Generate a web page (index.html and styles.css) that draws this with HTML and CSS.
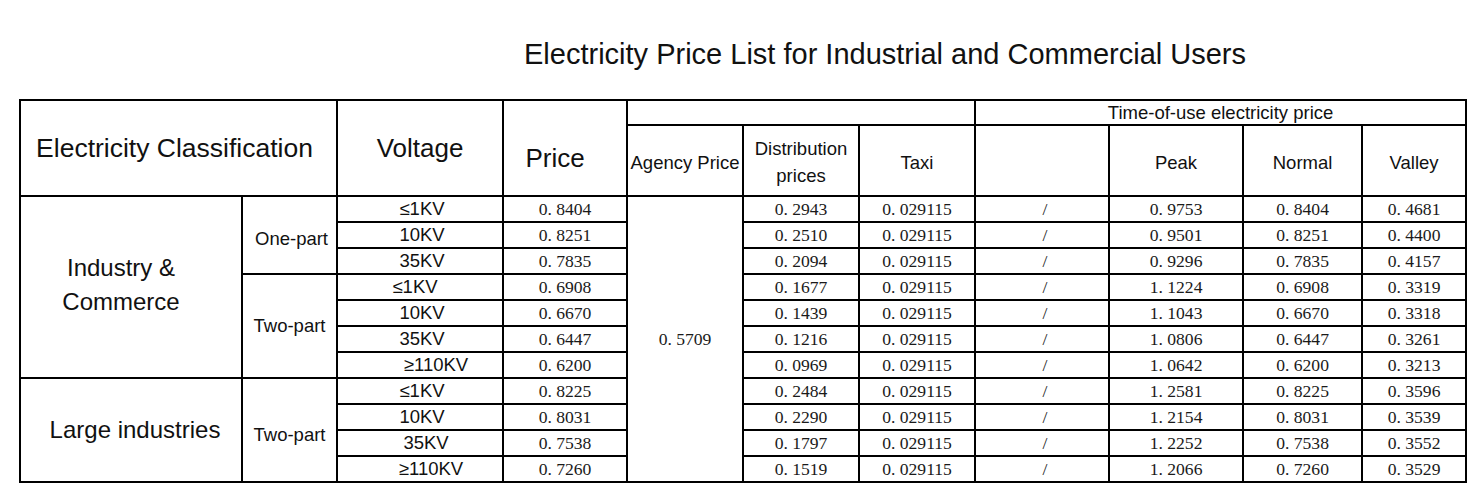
FILE: index.html
```html
<!DOCTYPE html>
<html lang="en">
<head>
<meta charset="utf-8">
<title>Electricity Price List for Industrial and Commercial Users</title>
<link rel="stylesheet" href="styles.css">
</head>
<body>
<h1 class="title">Electricity Price List for Industrial and Commercial Users</h1>
<table class="price-table">
  <colgroup>
    <col class="c-cat"><col class="c-sub"><col class="c-volt"><col class="c-price">
    <col class="c-agency"><col class="c-dist"><col class="c-taxi">
    <col class="c-slash"><col class="c-peak"><col class="c-normal"><col class="c-valley">
  </colgroup>
  <thead>
    <tr class="head-top">
      <th colspan="2" rowspan="2" class="big class-head">Electricity Classification</th>
      <th rowspan="2" class="big">Voltage</th>
      <th rowspan="2" class="big price-head">Price</th>
      <th colspan="3"></th>
      <th colspan="4" class="mid">Time-of-use electricity price</th>
    </tr>
    <tr class="head-sub">
      <th class="mid">Agency Price</th>
      <th class="mid dist">Distribution<br>prices</th>
      <th class="mid">Taxi</th>
      <th></th>
      <th class="mid">Peak</th>
      <th class="mid">Normal</th>
      <th class="mid">Valley</th>
    </tr>
  </thead>
  <tbody>
    <tr>
      <td rowspan="7" class="cat cat-ic">Industry &amp;<br>Commerce</td>
      <td rowspan="3" class="sub sub-one">One-part</td>
      <td class="volt">≤1KV</td><td class="num">0. 8404</td>
      <td rowspan="11" class="num">0. 5709</td>
      <td class="num">0. 2943</td><td class="num">0. 029115</td><td class="num slash">/</td>
      <td class="num">0. 9753</td><td class="num">0. 8404</td><td class="num">0. 4681</td>
    </tr>
    <tr>
      <td class="volt">10KV</td><td class="num">0. 8251</td>
      <td class="num">0. 2510</td><td class="num">0. 029115</td><td class="num slash">/</td>
      <td class="num">0. 9501</td><td class="num">0. 8251</td><td class="num">0. 4400</td>
    </tr>
    <tr>
      <td class="volt">35KV</td><td class="num">0. 7835</td>
      <td class="num">0. 2094</td><td class="num">0. 029115</td><td class="num slash">/</td>
      <td class="num">0. 9296</td><td class="num">0. 7835</td><td class="num">0. 4157</td>
    </tr>
    <tr>
      <td rowspan="4" class="sub">Two-part</td>
      <td class="volt volt-left">≤1KV</td><td class="num">0. 6908</td>
      <td class="num">0. 1677</td><td class="num">0. 029115</td><td class="num slash">/</td>
      <td class="num">1. 1224</td><td class="num">0. 6908</td><td class="num">0. 3319</td>
    </tr>
    <tr>
      <td class="volt">10KV</td><td class="num">0. 6670</td>
      <td class="num">0. 1439</td><td class="num">0. 029115</td><td class="num slash">/</td>
      <td class="num">1. 1043</td><td class="num">0. 6670</td><td class="num">0. 3318</td>
    </tr>
    <tr>
      <td class="volt">35KV</td><td class="num">0. 6447</td>
      <td class="num">0. 1216</td><td class="num">0. 029115</td><td class="num slash">/</td>
      <td class="num">1. 0806</td><td class="num">0. 6447</td><td class="num">0. 3261</td>
    </tr>
    <tr>
      <td class="volt volt-right">≥110KV</td><td class="num">0. 6200</td>
      <td class="num">0. 0969</td><td class="num">0. 029115</td><td class="num slash">/</td>
      <td class="num">1. 0642</td><td class="num">0. 6200</td><td class="num">0. 3213</td>
    </tr>
    <tr>
      <td rowspan="4" class="cat cat-li">Large industries</td>
      <td rowspan="4" class="sub sub-li">Two-part</td>
      <td class="volt">≤1KV</td><td class="num">0. 8225</td>
      <td class="num">0. 2484</td><td class="num">0. 029115</td><td class="num slash">/</td>
      <td class="num">1. 2581</td><td class="num">0. 8225</td><td class="num">0. 3596</td>
    </tr>
    <tr>
      <td class="volt">10KV</td><td class="num">0. 8031</td>
      <td class="num">0. 2290</td><td class="num">0. 029115</td><td class="num slash">/</td>
      <td class="num">1. 2154</td><td class="num">0. 8031</td><td class="num">0. 3539</td>
    </tr>
    <tr>
      <td class="volt volt-r2">35KV</td><td class="num">0. 7538</td>
      <td class="num">0. 1797</td><td class="num">0. 029115</td><td class="num slash">/</td>
      <td class="num">1. 2252</td><td class="num">0. 7538</td><td class="num">0. 3552</td>
    </tr>
    <tr>
      <td class="volt volt-r3">≥110KV</td><td class="num">0. 7260</td>
      <td class="num">0. 1519</td><td class="num">0. 029115</td><td class="num slash">/</td>
      <td class="num">1. 2066</td><td class="num">0. 7260</td><td class="num">0. 3529</td>
    </tr>
  </tbody>
</table>
</body>
</html>
```

FILE: styles.css
```css
html, body {
  margin: 0;
  padding: 0;
  background: #ffffff;
  color: #000000;
  font-family: "Liberation Sans", Arial, sans-serif;
}

.title {
  margin: 0;
  padding: 38px 0 0 524px;
  font-size: 29px;
  line-height: 33px;
  font-weight: normal;
  color: #111111;
}

.price-table {
  margin: 28px 0 0 19px;
  width: 1448px;
  border-collapse: collapse;
  table-layout: fixed;
}

.c-cat { width: 222px; }
.c-sub { width: 95px; }
.c-volt { width: 166px; }
.c-price { width: 124px; }
.c-agency { width: 116px; }
.c-dist { width: 116px; }
.c-taxi { width: 116px; }
.c-slash { width: 134px; }
.c-peak { width: 134px; }
.c-normal { width: 119px; }
.c-valley { width: 104px; }

.price-table th,
.price-table td {
  border: 2px solid #000000;
  padding: 0;
  text-align: center;
  vertical-align: middle;
  font-weight: normal;
  color: #111111;
  white-space: nowrap;
}

.price-table .head-top { height: 25px; }
.price-table .head-sub { height: 71px; }
.price-table tbody tr { height: 26px; }

.price-table .big {
  font-size: 26px;
  line-height: 30px;
}

.price-table .class-head {
  font-size: 26.5px;
  padding-right: 8px;
}

.price-table .price-head {
  padding-top: 20px;
  padding-right: 20px;
}

.price-table .mid {
  font-size: 18.5px;
  line-height: 22px;
}

.price-table .head-sub .mid {
  padding-top: 5px;
}

.price-table .head-sub .dist {
  line-height: 27px;
  padding-top: 3px;
}

.price-table .cat {
  font-size: 24px;
  line-height: 34px;
}

.price-table .cat-ic {
  padding-right: 20px;
  padding-bottom: 4px;
}

.price-table .cat-li {
  padding-left: 8px;
}

.price-table .sub {
  font-size: 18.5px;
  line-height: 22px;
}

.price-table .sub-one {
  padding-top: 8px;
  padding-left: 4px;
}

.price-table .sub-li {
  padding-top: 10px;
}

.price-table .volt {
  font-size: 18.5px;
  line-height: 22px;
  padding-left: 4px;
}

.price-table .volt-left {
  padding-left: 0;
  padding-right: 10px;
}

.price-table .volt-right {
  padding-left: 32px;
}

.price-table .volt-r2 {
  padding-left: 12px;
}

.price-table .volt-r3 {
  padding-left: 22px;
}

.price-table .num {
  font-family: "Liberation Serif", "Times New Roman", serif;
  font-size: 17.6px;
  line-height: 22px;
  color: #1a1a1a;
}

.price-table .slash {
  padding-left: 6px;
}
```
